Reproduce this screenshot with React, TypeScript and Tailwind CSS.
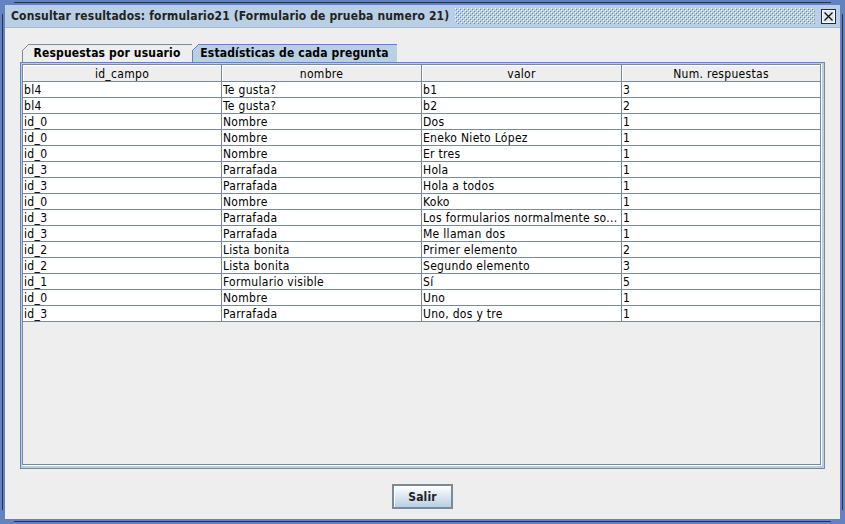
const rows: [string, string, string, string][] = [
  ['bl4', 'Te gusta?', 'b1', '3'],
  ['bl4', 'Te gusta?', 'b2', '2'],
  ['id_0', 'Nombre', 'Dos', '1'],
  ['id_0', 'Nombre', 'Eneko Nieto López', '1'],
  ['id_0', 'Nombre', 'Er tres', '1'],
  ['id_3', 'Parrafada', 'Hola', '1'],
  ['id_3', 'Parrafada', 'Hola a todos', '1'],
  ['id_0', 'Nombre', 'Koko', '1'],
  ['id_3', 'Parrafada', 'Los formularios normalmente so...', '1'],
  ['id_3', 'Parrafada', 'Me llaman dos', '1'],
  ['id_2', 'Lista bonita', 'Primer elemento', '2'],
  ['id_2', 'Lista bonita', 'Segundo elemento', '3'],
  ['id_1', 'Formulario visible', 'Sí', '5'],
  ['id_0', 'Nombre', 'Uno', '1'],
  ['id_3', 'Parrafada', 'Uno, dos y tre', '1'],
];

const headers = ['id_campo', 'nombre', 'valor', 'Num. respuestas'];
// last column has no own grid line: the scroll pane border sits right after it
const colW = [
  'w-[199px] border-r',
  'w-[200px] border-r',
  'w-[200px] border-r',
  'w-[198px]',
];

function Bumps() {
  return (
    <svg className="h-[16px] flex-1" shapeRendering="crispEdges">
      <defs>
        <pattern id="bumps" width="4" height="4" patternUnits="userSpaceOnUse">
          <rect x="0" y="0" width="1" height="1" fill="#ffffff" />
          <rect x="2" y="2" width="1" height="1" fill="#ffffff" />
          <rect x="1" y="1" width="1" height="1" fill="#6382BF" />
          <rect x="3" y="3" width="1" height="1" fill="#6382BF" />
        </pattern>
      </defs>
      <rect width="100%" height="100%" fill="url(#bumps)" />
    </svg>
  );
}

function CloseButton() {
  return (
    <svg width="15" height="15" viewBox="0 0 15 15" shapeRendering="crispEdges">
      <rect x="0.5" y="0.5" width="14" height="14" fill="#DDE8F3" stroke="#1c2a48" />
      <rect x="1.5" y="1.5" width="12" height="12" fill="none" stroke="#ffffff" />
      <path d="M3.5 3.5 L11.5 11.5 M11.5 3.5 L3.5 11.5" stroke="#111" strokeWidth="1.3" shapeRendering="geometricPrecision" />
    </svg>
  );
}

function TitleBar() {
  return (
    <div className="flex items-center h-[23px] bg-[#B8CFE5] pl-[6px] pr-[4px] border-b border-[#A3B8CC]">
      <span className="font-bold whitespace-nowrap text-[#222] tracking-[0.15px]">
        Consultar resultados: formulario21 (Formulario de prueba numero 21)
      </span>
      <div className="flex-1 flex ml-[6px] mr-[6px]">
        <Bumps />
      </div>
      <CloseButton />
    </div>
  );
}

function Tab({ label, selected, width }: { label: string; selected?: boolean; width: string }) {
  return (
    <div className={`relative h-[18px] ${width} flex items-center justify-center font-bold whitespace-nowrap tracking-[0.15px]`}>
      <svg className="absolute inset-0 w-full h-full" preserveAspectRatio="none" shapeRendering="crispEdges">
        <polygon
          points="0.5,18 0.5,6.5 6.5,0.5 2000,0.5 2000,18"
          fill={selected ? '#B8CFE5' : '#EEEEEE'}
          stroke={selected ? '#6382BF' : '#7A8A99'}
        />
      </svg>
      <span className="relative">{label}</span>
    </div>
  );
}

function Table() {
  return (
    <div className="flex flex-col tracking-[0.3px]">
      <div className="flex h-[17px] bg-[#EEEEEE] border-b border-[#7A8A99]">
        {headers.map((h, i) => (
          <div
            key={h}
            className={`${colW[i]} shrink-0 flex items-center justify-center pt-[1px] border-[#7A8A99] shadow-[inset_1px_1px_0_#ffffff]`}
          >
            {h}
          </div>
        ))}
      </div>
      {rows.map((r, ri) => (
        <div key={ri} className="flex h-[16px] bg-white border-b border-[#7A8A99]">
          {r.map((c, ci) => (
            <div
              key={ci}
              className={`${colW[ci]} shrink-0 pl-[1px] leading-[16px] whitespace-nowrap border-[#7A8A99]`}
            >
              {c}
            </div>
          ))}
        </div>
      ))}
    </div>
  );
}

export default function App() {
  return (
    <div className="relative w-[845px] h-[524px] bg-[#6382BF] p-[5px] font-['DejaVu_Sans_Condensed','DejaVu_Sans',sans-serif] text-[12px] text-black">
      <div className="absolute left-[14px] right-[14px] top-[2px] h-px bg-[#26334f]" />
      <div className="absolute left-[14px] right-[14px] bottom-[2px] h-px bg-[#26334f]" />
      <div className="absolute top-[14px] bottom-[14px] left-[2px] w-px bg-[#26334f]" />
      <div className="absolute top-[14px] bottom-[14px] right-[2px] w-px bg-[#26334f]" />
      <div className="relative flex flex-col h-full">
        <TitleBar />
        <div className="flex-1 bg-[#EEEEEE] flex flex-col pl-[15px] pr-[15px] pt-[16px]">
          <div className="flex pl-[2px]">
            <Tab label="Respuestas por usuario" width="w-[170px]" />
            <Tab label="Estadísticas de cada pregunta" width="w-[205px]" selected />
          </div>
          <div className="h-[407px] border border-[#7A8A99] border-l-[#6382BF] border-t-[#6382BF] bg-[#B8CFE5] pl-[1px] pt-[1px] pr-[2px] pb-[2px]">
            <div className="h-full border-r border-b border-white">
              <div className="h-full border border-[#7A8A99] bg-[#EEEEEE] overflow-hidden">
                <Table />
              </div>
            </div>
          </div>
          <div className="flex justify-center pt-[15px]">
            <button className="w-[61px] h-[25px] border-2 border-[#7A8A99] bg-gradient-to-b from-white to-[#B8CFE5] font-bold text-[#222] tracking-[0.15px] shadow-[inset_1px_1px_0_#ffffff]">
              Salir
            </button>
          </div>
        </div>
      </div>
    </div>
  );
}
